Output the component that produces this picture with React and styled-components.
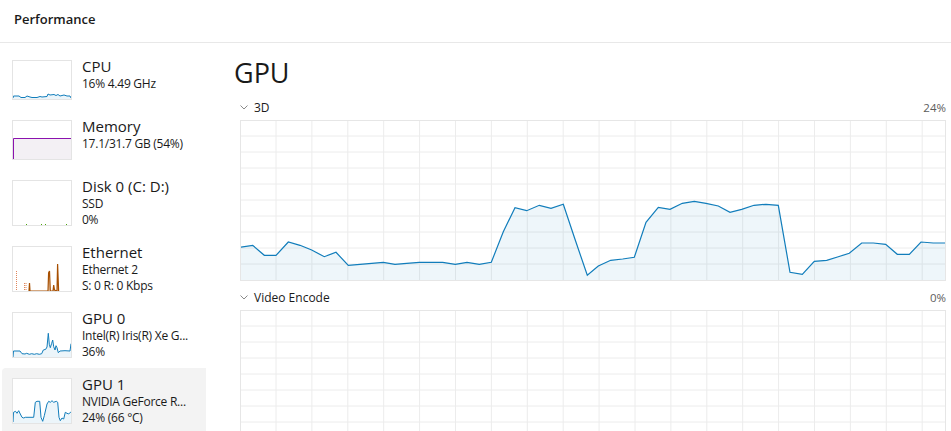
import React from 'react';
import styled, { createGlobalStyle } from 'styled-components';

const GlobalStyle = createGlobalStyle`
  html, body {
    margin: 0;
    padding: 0;
    background: #ffffff;
    overflow: hidden;
  }
  body {
    font-family: "Open Sans", "Noto Sans", sans-serif;
    color: #1a1a1a;
  }
`;

const Page = styled.div`
  width: 951px;
  height: 431px;
  overflow: hidden;
  display: flex;
  flex-direction: column;
`;

const TopBar = styled.header`
  flex: none;
  display: flex;
  align-items: center;
  padding-left: 14px;
  border-bottom: 1px solid #e8e8e8;
  box-sizing: border-box;
  height: 43px;
`;

const TopTitle = styled.h1`
  margin: 0 0 5px;
  font-size: 13px;
  font-weight: 600;
  color: #1a1a1a;
`;

const Body = styled.div`
  flex: 1;
  display: flex;
  min-height: 0;
`;

const Sidebar = styled.nav`
  width: 204px;
  flex: none;
  padding: 7px 0 0 2px;
  display: flex;
  flex-direction: column;
`;

const Item = styled.div`
  display: flex;
  gap: 10px;
  padding: 10px 10px;
  height: ${(p) => p.$tall ? 66 : 60}px;
  box-sizing: border-box;
  background: ${(p) => (p.$active ? '#f3f3f3' : 'transparent')};
  border-radius: 4px 0 0 0;
`;

const Thumb = styled.div`
  width: 60px;
  height: ${(p) => p.$h}px;
  flex: none;
  border: 1px solid #e4e4e4;
  box-sizing: border-box;
  background: #ffffff;
  svg {
    display: block;
    width: 100%;
    height: 100%;
  }
`;

const ItemText = styled.div`
  display: flex;
  flex-direction: column;
  margin-top: -3px;
  white-space: nowrap;
`;

const ItemTitle = styled.div`
  font-size: 15px;
  line-height: 19px;
  color: #1a1a1a;
`;

const ItemSub = styled.div`
  font-size: 12px;
  line-height: 16px;
  color: #1a1a1a;
  letter-spacing: -0.25px;
`;

const Main = styled.main`
  flex: 1;
  padding: 12px 5px 0 28px;
  display: flex;
  flex-direction: column;
  min-width: 0;
`;

const Heading = styled.h2`
  margin: 0 0 7px;
  font-size: 27px;
  line-height: 36px;
  font-weight: 400;
  color: #1a1a1a;
`;

const Section = styled.section`
  padding-left: 6px;
  margin-bottom: 7px;
`;

const LabelRow = styled.div`
  height: 18px;
  display: flex;
  align-items: center;
  justify-content: space-between;
  margin-bottom: 4px;
`;

const Label = styled.div`
  display: flex;
  align-items: center;
  gap: 6px;
  font-size: 12px;
  color: #1a1a1a;
`;

const Value = styled.div`
  font-size: 11.5px;
  color: #5c5c5c;
`;

const ChartBox = styled.div`
  height: 161px;
  border: 1px solid #e6e6e6;
  box-sizing: border-box;
  svg {
    display: block;
    width: 100%;
    height: 100%;
  }
`;

const BLUE = '#117dbb';

const gpuLine = [
  [240, 247.3], [252.7, 245.3], [264.3, 255.3], [276, 255.3], [288.3, 242], [300, 245.3],
  [311.7, 250], [324.3, 256.7], [336, 252.3], [348.3, 265.3], [360, 264.3], [371.7, 263.3],
  [383.3, 262.3], [395, 264.3], [406.7, 263.3], [419.3, 262.3], [431, 262.3], [442.7, 262.3],
  [455.3, 264.3], [467, 262.3], [479.3, 264.3], [491.3, 262.3], [503.3, 231.7], [515, 207.7],
  [526.7, 210.7], [539.3, 205.3], [551, 208.3], [563.3, 204.3], [575, 239.3], [587.3, 275.3],
  [598.3, 266], [610.7, 260.3], [622.7, 259], [634.3, 257.3], [646, 222.3], [658.3, 207.3],
  [670, 209.3], [682.3, 203.3], [694.3, 201.3], [706, 203.3], [718.3, 206], [730, 212.3],
  [741.7, 209.3], [754, 205.3], [766, 204.3], [778.3, 205.3], [790, 272.3], [802.3, 274.3],
  [814.3, 261.3], [826.7, 260.3], [838.3, 256.7], [849.3, 253.3], [861.7, 243], [873.3, 243],
  [885.7, 244.3], [897.3, 254.3], [909.3, 254.3], [921, 242], [933.3, 243], [946, 243],
];

function Grid({ top }) {
  const xs = Array.from({ length: 19 }, (_, k) => 276 + 35.9 * k);
  const ys = Array.from({ length: 9 }, (_, k) => top + 16 + 16 * k);
  return (
    <g stroke="#ececec" strokeWidth="1">
      {xs.map((x) => (
        <line key={'x' + x} x1={x} x2={x} y1={top} y2={top + 161} />
      ))}
      {ys.map((y) => (
        <line key={'y' + y} x1={240} x2={946} y1={y} y2={y} />
      ))}
    </g>
  );
}

function BigChart({ top, points }) {
  const bottom = top + 160;
  const line = points ? points.map((p) => p.join(',')).join(' ') : '';
  return (
    <ChartBox>
      <svg viewBox={`241 ${top + 1} 704 159`} preserveAspectRatio="none">
        <Grid top={top} />
        {points && (
          <>
            <polygon
              points={`240,${bottom} ${line} 946,${bottom}`}
              fill="rgba(17,125,187,0.07)"
            />
            <polyline points={`240,${bottom} ${line}`} fill="none" stroke={BLUE} strokeWidth="1.2" />
          </>
        )}
      </svg>
    </ChartBox>
  );
}

function Spark({ pts, h, color, fill, base }) {
  const b = base ?? h;
  const line = pts.map((p) => p.join(',')).join(' ');
  return (
    <svg viewBox={`0 0 58 ${h - 2}`} preserveAspectRatio="none">
      <polygon points={`0,${b} ${line} 58,${b}`} fill={fill} />
      <polyline points={line} fill="none" stroke={color} strokeWidth="1" />
    </svg>
  );
}

const cpuPts = [
  [0, 37], [0.5, 35], [6, 35], [8, 36.5], [12, 36.5], [14, 35], [17, 36], [19, 36.5], [24, 36.5],
  [27, 35.5], [29, 36], [34, 35.5], [35, 33], [37, 34], [41, 33.5], [43, 34.5], [45, 33.5],
  [47, 35], [49, 34.5], [51, 34], [54, 35], [57, 35], [58, 37],
];

const gpu0Pts = [
  [0, 44], [0.5, 38], [7, 38], [9, 40.7], [12, 41], [13.7, 40.3], [16.3, 41.3], [18.7, 40.7],
  [21.3, 41.3], [23.7, 40.7], [26.3, 41.3], [28.7, 40.7], [30.3, 37], [32.7, 36.3], [34, 34],
  [35.3, 20.3], [36.3, 31.3], [37.3, 34.7], [38.7, 30.3], [39.7, 27], [40.7, 33.7], [42, 37],
  [43, 32.7], [44, 34.7], [45.3, 39.7], [47, 38], [52, 37.7], [57, 38], [58, 30.7],
];

const gpu1Pts = [
  [0, 43], [0.5, 33.3], [2.5, 32.3], [4, 34.3], [5.7, 31.7], [7.3, 35], [9, 38.3], [10.7, 39],
  [12.3, 38.3], [20.7, 38.3], [22.3, 23.3], [24, 22.3], [26.7, 22.3], [28, 38.3], [29.7, 42.3],
  [31.3, 36.7], [34, 25], [35.7, 22.3], [37.3, 23.3], [39, 21.7], [40.7, 23.3], [43.3, 22.3],
  [44.7, 23.3], [46, 38.3], [47.3, 41.7], [49, 39], [50.7, 40], [52.3, 33.3], [54, 34.3],
  [55.7, 35], [57.3, 33.3], [58, 33.3],
];

function MemoryThumb() {
  return (
    <svg viewBox="0 0 58 38" preserveAspectRatio="none">
      <rect x="0" y="17" width="58" height="21" fill="#f3f0f4" />
      <polyline points="0.5,38 0.5,17.5 58,17.5" fill="none" stroke="#8b12ae" strokeWidth="1" />
    </svg>
  );
}

function DiskThumb() {
  return (
    <svg viewBox="0 0 58 44" preserveAspectRatio="none">
      {[13, 28, 32, 53].map((x) => (
        <line key={x} x1={x} x2={x + 1} y1={43.5} y2={43.5} stroke="#4da60c" strokeWidth="1" />
      ))}
    </svg>
  );
}

function EthernetThumb() {
  const recv = '16,44 16.5,36 17,44 35,44 35.6,26 36.5,24 37.3,44 40,44 40.7,38 41.5,43 44,44 44.6,17 45.6,44';
  return (
    <svg viewBox="0 0 58 44" preserveAspectRatio="none">
      <polygon points={recv} fill="rgba(167,79,1,0.25)" />
      <polyline points={recv} fill="none" stroke="#a74f01" strokeWidth="1.2" />
      <line x1="3.5" x2="3.5" y1="24" y2="44" stroke="#e0855a" strokeWidth="1" strokeDasharray="1 1" />
      <line x1="11.5" x2="11.5" y1="36" y2="44" stroke="#e0855a" strokeWidth="1" strokeDasharray="1 1" />
      <line x1="13" x2="13" y1="36" y2="44" stroke="#e0855a" strokeWidth="1" strokeDasharray="1 1" />
    </svg>
  );
}

function Chevron() {
  return (
    <svg width="8" height="5" viewBox="0 0 8 5">
      <polyline points="0.5,0.5 4,4 7.5,0.5" fill="none" stroke="#8a8a8a" strokeWidth="1" />
    </svg>
  );
}

const items = [
  {
    title: 'CPU',
    lines: ['16% 4.49 GHz'],
    thumb: <Spark pts={cpuPts} h={40} color={BLUE} fill="rgba(17,125,187,0.08)" />,
  },
  { title: 'Memory', lines: ['17.1/31.7 GB (54%)'], thumb: <MemoryThumb /> },
  { title: 'Disk 0 (C: D:)', lines: ['SSD', '0%'], thumb: <DiskThumb /> },
  { title: 'Ethernet', lines: ['Ethernet 2', 'S: 0 R: 0 Kbps'], thumb: <EthernetThumb /> },
  {
    title: 'GPU 0',
    lines: ['Intel(R) Iris(R) Xe G...', '36%'],
    thumb: <Spark pts={gpu0Pts} h={46} color={BLUE} fill="rgba(17,125,187,0.08)" base={44} />,
  },
  {
    title: 'GPU 1',
    lines: ['NVIDIA GeForce R...', '24% (66 °C)'],
    thumb: <Spark pts={gpu1Pts} h={46} color={BLUE} fill="rgba(17,125,187,0.08)" base={44} />,
    active: true,
  },
];

export default function App() {
  return (
    <Page>
      <GlobalStyle />
      <TopBar>
        <TopTitle>Performance</TopTitle>
      </TopBar>
      <Body>
        <Sidebar>
          {items.map((it) => {
            const tall = it.lines.length > 1;
            return (
              <Item key={it.title} $tall={tall} $active={it.active}>
                <Thumb $h={tall ? 46 : 40}>{it.thumb}</Thumb>
                <ItemText>
                  <ItemTitle>{it.title}</ItemTitle>
                  {it.lines.map((l) => (
                    <ItemSub key={l}>{l}</ItemSub>
                  ))}
                </ItemText>
              </Item>
            );
          })}
        </Sidebar>
        <Main>
          <Heading>GPU</Heading>
          <Section>
            <LabelRow>
              <Label>
                <Chevron />
                3D
              </Label>
              <Value>24%</Value>
            </LabelRow>
            <BigChart top={120} points={gpuLine} />
          </Section>
          <Section>
            <LabelRow>
              <Label>
                <Chevron />
                Video Encode
              </Label>
              <Value>0%</Value>
            </LabelRow>
            <BigChart top={310} />
          </Section>
        </Main>
      </Body>
    </Page>
  );
}
